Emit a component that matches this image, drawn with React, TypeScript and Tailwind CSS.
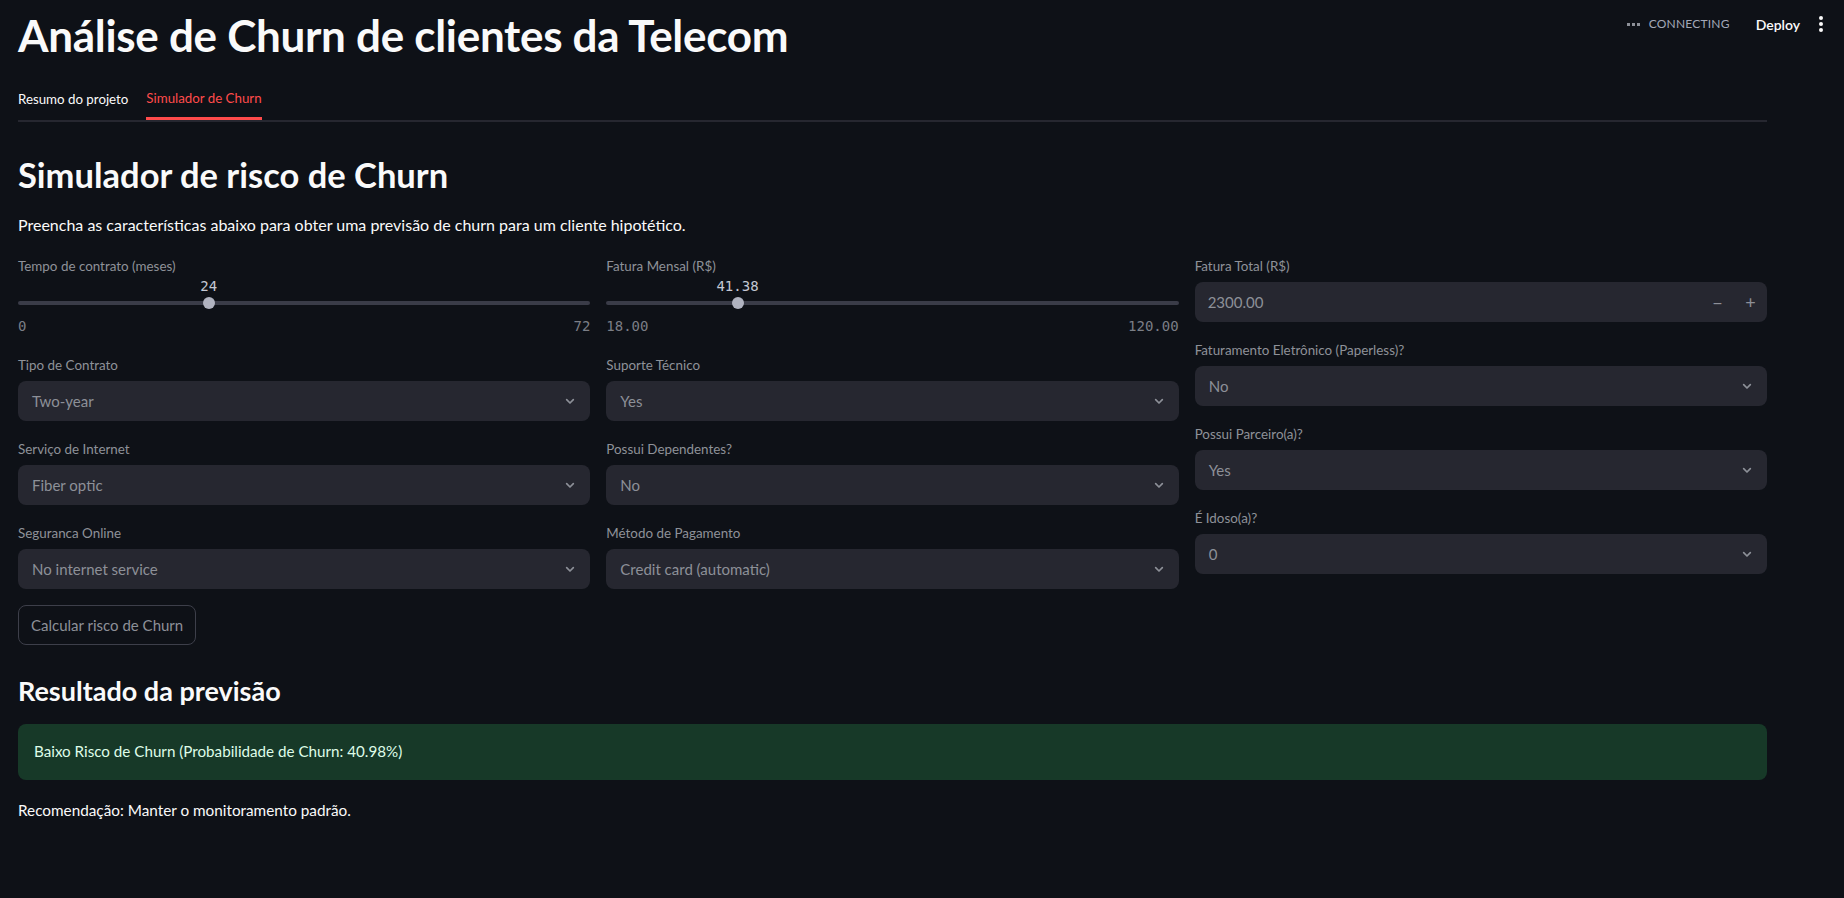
import React from 'react';

const font = { fontFamily: 'Lato, "Noto Sans", sans-serif' };

type SliderProps = {
  label: string;
  value: string;
  min: string;
  max: string;
  pct: number;
};

const Chevron = () => (
  <svg width="16" height="16" viewBox="0 0 24 24" fill="none" stroke="#8d9098" strokeWidth="2.5" strokeLinecap="round" strokeLinejoin="round">
    <path d="M7 10l5 5 5-5" />
  </svg>
);

const Label = ({ text }: { text: string }) => (
  <div className="h-[24px] mb-[4px] flex items-center text-[13.4px] text-[#8e9199]">{text}</div>
);

const Slider = ({ label, value, min, max, pct }: SliderProps) => (
  <div className="flex flex-col">
    <Label text={label} />
    <div className="relative h-[14px] -mt-[4px] mb-[4px]">
      <span
        className="absolute top-0 -translate-x-1/2 text-[14px] leading-[16px] text-[#c3c7d3]"
        style={{ left: `${pct}%`, fontFamily: '"DejaVu Sans Mono", monospace' }}
      >
        {value}
      </span>
    </div>
    <div className="relative h-[14px] flex items-center">
      <div className="w-full h-[4px] rounded-full bg-[#3a3c48]" />
      <div
        className="absolute top-[1px] w-[12px] h-[12px] -ml-[6px] rounded-full bg-[#b0b3c0]"
        style={{ left: `${pct}%` }}
      />
    </div>
    <div
      className="flex justify-between mt-[8px] mb-[3px] h-[16px] text-[14px] leading-[16px] text-[#7b7e86]"
      style={{ fontFamily: '"DejaVu Sans Mono", monospace' }}
    >
      <span>{min}</span>
      <span>{max}</span>
    </div>
  </div>
);

const Select = ({ label, value }: { label: string; value: string }) => (
  <div className="flex flex-col">
    <Label text={label} />
    <div className="h-[40px] rounded-lg bg-[#262730] flex items-center justify-between pl-[14px] pr-[12px] text-[15px] text-[#8d9098]">
      <span>{value}</span>
      <Chevron />
    </div>
  </div>
);

const NumberInput = ({ label, value }: { label: string; value: string }) => (
  <div className="flex flex-col">
    <Label text={label} />
    <div className="h-[40px] rounded-lg bg-[#262730] flex items-center pl-[13px] text-[15px] text-[#8d9098]">
      <span className="flex-1">{value}</span>
      <span className="w-[33px] text-center text-[18px] text-[#8d9098]">−</span>
      <span className="w-[33px] text-center text-[18px] text-[#8d9098]">+</span>
    </div>
  </div>
);

export default function App() {
  return (
    <div className="relative min-h-screen w-full bg-[#0e1117] text-[#fafafa]" style={font}>
      <div className="absolute top-0 right-0 h-[48px] flex items-center pr-[21px]">
        <div className="flex items-center gap-[2px] mr-[9px]">
          <span className="w-[3px] h-[3px] bg-[#8d9098]" />
          <span className="w-[3px] h-[3px] bg-[#8d9098]" />
          <span className="w-[3px] h-[3px] bg-[#8d9098]" />
        </div>
        <span className="text-[12px] tracking-[0.2px] text-[#a3a8b8]">CONNECTING</span>
        <span className="ml-[26px] text-[14px] font-semibold text-[#fafafa]">Deploy</span>
        <div className="ml-[19px] flex flex-col gap-[2px] items-center">
          <span className="w-[4px] h-[4px] rounded-full bg-[#fafafa]" />
          <span className="w-[4px] h-[4px] rounded-full bg-[#fafafa]" />
          <span className="w-[4px] h-[4px] rounded-full bg-[#fafafa]" />
        </div>
      </div>

      <div className="pl-[18px] w-[1767px]">
        <h1 className="pt-[9px] text-[44px] leading-[1.2] font-bold tracking-[-0.3px]">
          Análise de Churn de clientes da Telecom
        </h1>

        <div className="mt-[20px] flex gap-[18px] border-b-2 border-[#262730] text-[13.3px]">
          <div className="h-[38px] flex items-center pb-[1px] text-[#fafafa]">Resumo do projeto</div>
          <div className="h-[38px] flex items-center border-b-[3px] border-[#ff4b4b] -mb-[2px] text-[#ff4b4b]">
            Simulador de Churn
          </div>
        </div>

        <h2 className="mt-[32px] text-[34.5px] leading-[1.2] font-bold">Simulador de risco de Churn</h2>
        <p className="mt-[18px] text-[16px] leading-[24px]">
          Preencha as características abaixo para obter uma previsão de churn para um cliente hipotético.
        </p>

        <div className="mt-[17px] grid grid-cols-3 gap-4 items-start">
          <div className="flex flex-col gap-4">
            <Slider label="Tempo de contrato (meses)" value="24" min="0" max="72" pct={33.33} />
            <Select label="Tipo de Contrato" value="Two-year" />
            <Select label="Serviço de Internet" value="Fiber optic" />
            <Select label="Seguranca Online" value="No internet service" />
            <div>
              <button className="h-[40px] px-[12px] rounded-lg border border-[#3d3f4a] text-[15px] text-[#8d9098]">
                Calcular risco de Churn
              </button>
            </div>
          </div>
          <div className="flex flex-col gap-4">
            <Slider label="Fatura Mensal (R$)" value="41.38" min="18.00" max="120.00" pct={22.92} />
            <Select label="Suporte Técnico" value="Yes" />
            <Select label="Possui Dependentes?" value="No" />
            <Select label="Método de Pagamento" value="Credit card (automatic)" />
          </div>
          <div className="flex flex-col gap-4">
            <NumberInput label="Fatura Total (R$)" value="2300.00" />
            <Select label="Faturamento Eletrônico (Paperless)?" value="No" />
            <Select label="Possui Parceiro(a)?" value="Yes" />
            <Select label="É Idoso(a)?" value="0" />
          </div>
        </div>

        <h3 className="mt-[30px] text-[27px] leading-[1.2] font-bold">Resultado da previsão</h3>
        <div className="mt-[16px] h-[56px] rounded-lg bg-[#173928] flex items-center px-[16px] text-[15.2px] text-[#dffde9]">
          Baixo Risco de Churn (Probabilidade de Churn: 40.98%)
        </div>
        <p className="mt-[18px] text-[15.3px] leading-[24px]">Recomendação: Manter o monitoramento padrão.</p>
      </div>
    </div>
  );
}
